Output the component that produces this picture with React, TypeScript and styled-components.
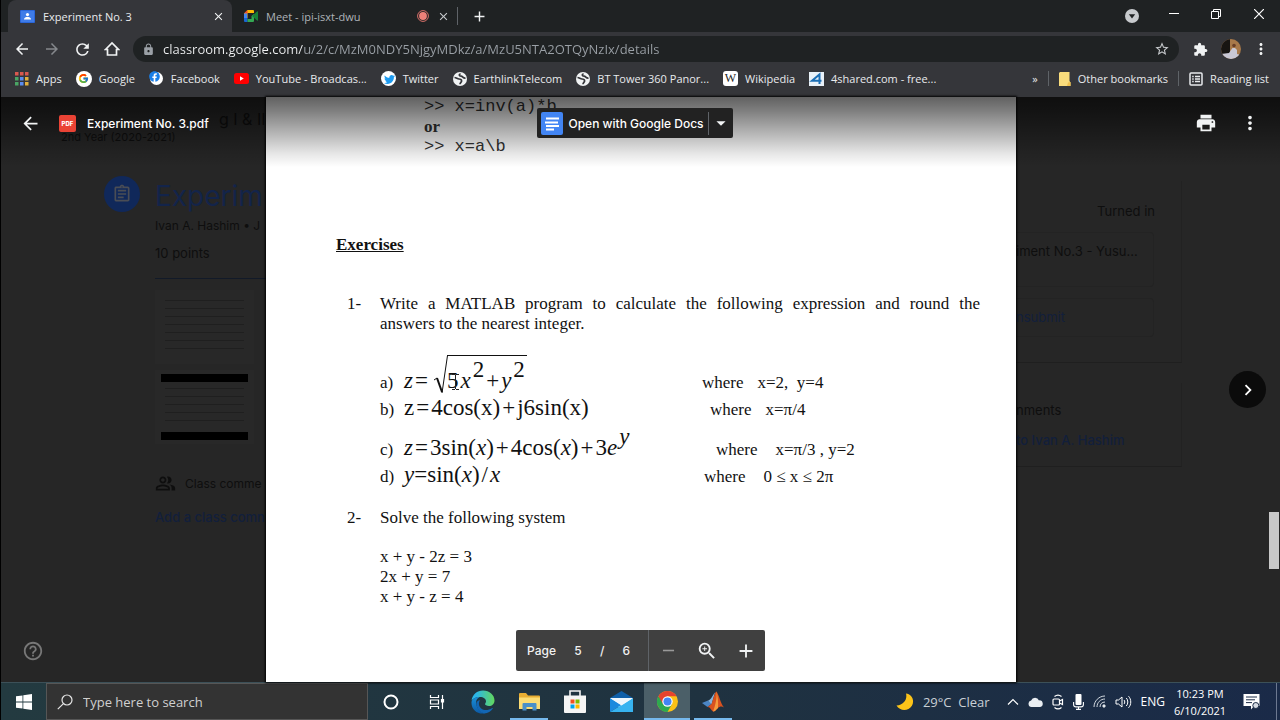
import React from "react";
import styled, { createGlobalStyle, css } from "styled-components";
import {
  MdAdd,
  MdArrowBack,
  MdArrowForward,
  MdArrowDropDown,
  MdChevronRight,
  MdClose,
  MdExtension,
  MdHelpOutline,
  MdLock,
  MdMoreVert,
  MdOutlineAssignment,
  MdOutlinePeopleAlt,
  MdPrint,
  MdRefresh,
  MdRemove,
  MdStarBorder,
  MdZoomIn,
} from "react-icons/md";
import { FaFacebook, FaTwitter } from "react-icons/fa";
import { FcGoogle } from "react-icons/fc";

const uiFont = `"Open Sans", "Noto Sans", sans-serif`;
const productFont = `Inter, Roboto, sans-serif`;
const docFont = `"Liberation Serif", "Times New Roman", serif`;
const monoFont = `"Liberation Mono", "Courier New", monospace`;

const GlobalStyle = createGlobalStyle`
  * { box-sizing: border-box; }
  body { margin: 0; background: #000; font-family: ${uiFont}; }
  button, input { font: inherit; color: inherit; margin: 0; padding: 0; border: 0; background: none; }
  button { cursor: pointer; }
  a { color: inherit; text-decoration: none; }
  p, h1, h2, ol, ul { margin: 0; padding: 0; }
  svg { display: block; flex: none; }
`;

const Screen = styled.div`
  display: flex;
  flex-direction: column;
  min-height: 100vh;
  border-left: 1px solid #000;
  overflow: hidden;
`;

/* ---------- Browser frame ---------- */

const TabStrip = styled.header`
  display: flex;
  align-items: stretch;
  height: 32px;
  padding-left: 7px;
  background: #1f2223;
  color: #e8eaed;
  font-size: 11px;
`;

const Tab = styled.div<{ $active?: boolean }>`
  display: flex;
  align-items: center;
  gap: 8px;
  width: ${(p) => (p.$active ? 224 : 225)}px;
  padding: 0 8px 0 12px;
  border-radius: 8px 8px 0 0;
  background: ${(p) => (p.$active ? "#35363a" : "transparent")};
  color: ${(p) => (p.$active ? "#e8eaed" : "#aeb3b8")};
`;

const TabTitle = styled.span`
  flex: 1;
  white-space: nowrap;
`;

const IconButton = styled.button<{ $w: number; $color?: string }>`
  display: flex;
  align-items: center;
  justify-content: center;
  flex: none;
  width: ${(p) => p.$w}px;
  color: ${(p) => p.$color ?? "#f1f3f4"};
`;

const Divider = styled.span<{ $h: number; $color?: string }>`
  flex: none;
  align-self: center;
  width: 1px;
  height: ${(p) => p.$h}px;
  background: ${(p) => p.$color ?? "#5f6368"};
`;

const Spacer = styled.span`
  flex: 1;
`;

const WindowButtons = styled.div`
  display: flex;
  align-items: center;
  padding-bottom: 4px;
`;

const Toolbar = styled.div`
  display: flex;
  align-items: center;
  height: 34px;
  padding: 0 4px 0 6px;
  background: #35363a;
`;

const Omnibox = styled.label`
  display: flex;
  align-items: center;
  gap: 8px;
  flex: 1;
  height: 26px;
  margin: 0 6px;
  padding: 0 9px;
  border-radius: 13px;
  background: #1f2223;
  color: #9aa0a6;
`;

const Address = styled.input`
  flex: 1;
  min-width: 0;
  height: 22px;
  font-size: 13px;
  color: #9aa0a6;
  outline: none;
  background: linear-gradient(90deg, #f1f3f4 140px, #9aa0a6 140px);
  background-clip: text;
  -webkit-text-fill-color: transparent;
`;

const Bookmarks = styled.nav`
  display: flex;
  align-items: center;
  gap: 14px;
  height: 31px;
  padding: 0 11px 6px 14px;
  background: #35363a;
  color: #e8eaed;
  font-size: 11px;
  white-space: nowrap;
`;

const Bookmark = styled.a`
  display: flex;
  align-items: center;
  gap: 7px;
`;

const BookmarkEnd = styled.div`
  display: flex;
  align-items: center;
  gap: 10px;
  margin-left: auto;
`;

/* ---------- Viewer ---------- */

const Viewer = styled.main`
  display: grid;
  grid-template-columns: minmax(0, 1fr) minmax(0, 750px) minmax(0, 1fr);
  flex: 1;
  padding-left: 1px;
  background: #262626;
  font-family: ${productFont};
  position: relative;
`;

const Behind = styled.div<{ $col: number }>`
  grid-area: 1 / ${(p) => p.$col};
  overflow: hidden;
  color: #0e0e0e;
  font-size: 13px;
  line-height: 20px;
  white-space: nowrap;
`;

const CourseHeader = styled.div`
  height: 79px;
  padding: 13px 0 0 59px;
  font-size: 11px;
  line-height: 18px;
`;

const CourseName = styled.div`
  padding-left: 158px;
  font-size: 16px;
`;

const Assignment = styled.div`
  display: grid;
  grid-template-columns: 36px 1fr;
  column-gap: 15px;
  padding-left: 102px;
`;

const Badge = styled.span`
  display: flex;
  align-items: center;
  justify-content: center;
  width: 36px;
  height: 36px;
  border-radius: 50%;
  background: #10285a;
  color: #4a4d55;
`;

const AssignmentBody = styled.div`
  display: flex;
  flex-direction: column;
`;

const AssignmentTitle = styled.h1`
  font-size: 28px;
  font-weight: 400;
  line-height: 40px;
  color: #13244a;
`;

const Author = styled.div`
  font-size: 12px;
`;

const Points = styled.div`
  padding: 7px 0 15px;
  border-bottom: 1px solid #121a28;
`;

const Thumb = styled.div`
  display: flex;
  flex-direction: column;
  width: 99px;
  height: 74px;
  margin-top: 11px;
  padding: 4px 6px;
  background: #282828;

  & + & {
    margin-top: 6px;
  }
`;

const ThumbBar = styled.span`
  height: 8px;
  background: #000;
`;

const ThumbLines = styled.span`
  flex: 1;
  margin: 6px 4px;
  background: repeating-linear-gradient(180deg, #1f1f1f 0 1px, transparent 1px 8px);
`;

const CommentsTitle = styled.div`
  display: flex;
  align-items: center;
  gap: 9px;
  padding: 29px 0 13px;
  font-size: 12px;
`;

const BlueText = styled.div`
  color: #121f3b;
  font-weight: 500;
`;

const SideCard = styled.section<{ $last?: boolean }>`
  display: flex;
  flex-direction: column;
  width: 166px;
  margin-top: ${(p) => (p.$last ? 20 : 84)}px;
  padding-top: ${(p) => (p.$last ? 17 : 20)}px;
  padding-bottom: ${(p) => (p.$last ? 16 : 25)}px;
  gap: ${(p) => (p.$last ? 10 : 11)}px;
  border-right: 1px solid #222;
  border-bottom: 1px solid #1f1f1f;
`;

const Turned = styled.div`
  align-self: flex-end;
  padding-right: 26px;
`;

const Slot = styled.div<{ $blue?: boolean }>`
  width: 138px;
  padding: ${(p) => (p.$blue ? "8px 0 9px" : "8px 0 25px")};
  border: 1px solid #232323;
  border-left: 0;
  border-radius: 0 4px 4px 0;
  color: ${(p) => (p.$blue ? "#121f3b" : "#0e0e0e")};
`;

const Sheet = styled.article`
  grid-area: 1 / 2;
  padding: 0 36px 0 70px;
  background: #fff;
  box-shadow: 0 0 2px 1px #000;
  color: #111;
  font-family: ${docFont};
  font-size: 17px;
  line-height: 20px;
`;

const CodeBlock = styled.div`
  padding-left: 88px;
  color: #333;
`;

const Code = styled.div`
  font-family: ${monoFont};
  white-space: pre;
`;

const Heading = styled.h2`
  margin: 78px 0 39px;
  font-size: 17px;
  line-height: 20px;
  text-decoration: underline;
`;

const Question = styled.div`
  display: grid;
  grid-template-columns: 33px 1fr;
  padding-left: 11px;
`;

const Prompt = styled.p`
  text-align: justify;
`;

const Expressions = styled.div`
  margin: 21px 0 19px 44px;
`;

const Expression = styled.div<{ $space?: boolean }>`
  display: grid;
  grid-template-columns: 24px 298px 1fr;
  align-items: baseline;
  margin-top: ${(p) => (p.$space ? 13 : 0)}px;
  line-height: 25px;
`;

const Formula = styled.span`
  display: inline-flex;
  align-items: baseline;
  gap: 2px;
  font-size: 23px;
  white-space: pre;
`;

const Root = styled.span`
  display: inline-flex;
  align-items: baseline;
  gap: 2px;
  position: relative;
  margin-left: 17px;
  padding: 12px 2px 0 0;
  border-top: 1px solid #111;
`;

const RootSign = styled.svg`
  position: absolute;
  left: -14px;
  top: -1px;
`;

const Power = styled.span`
  position: relative;
  bottom: 11px;
  line-height: 1px;
`;

const Where = styled.span<{ $indent: number; $far?: boolean }>`
  display: flex;
  gap: ${(p) => (p.$far ? 18 : 14)}px;
  padding-left: ${(p) => p.$indent}px;
`;

const System = styled.div`
  margin: 19px 0 0 44px;
`;

const Caret = styled.svg`
  position: absolute;
  left: 4px;
  top: 17px;
`;

const Controls = styled.div`
  grid-area: 1 / 1 / 2 / -1;
  display: grid;
  grid-template-rows: 1fr auto 1fr;
  z-index: 1;
`;

const ViewerHeader = styled.div`
  display: grid;
  grid-template-columns: 1fr auto 1fr;
  align-items: start;
  align-self: start;
  height: 70px;
  padding: 11px 25px 0 13px;
  margin-left: -1px;
  background: linear-gradient(180deg, rgba(0, 0, 0, 0.62), rgba(0, 0, 0, 0.5) 20%, rgba(0, 0, 0, 0.1) 80%, transparent);
  color: #fff;
  font-size: 12px;
  font-weight: 500;
`;

const FileTitle = styled.div<{ $end?: boolean }>`
  display: flex;
  align-items: center;
  justify-content: ${(p) => (p.$end ? "flex-end" : "flex-start")};
  gap: ${(p) => (p.$end ? 28 : 11)}px;
  height: 30px;
`;

const PdfMark = styled.span`
  display: flex;
  align-items: center;
  justify-content: center;
  width: 17px;
  height: 17px;
  margin-left: 2px;
  border-radius: 2px;
  background: #ea4335;
  font-size: 6px;
  font-weight: 800;
`;

const OpenWith = styled.div`
  display: flex;
  align-items: center;
  width: 196px;
  height: 30px;
  border-radius: 2px;
  background: #222;
`;

const OpenButton = styled.button`
  display: flex;
  align-items: center;
  gap: 6px;
  flex: 1;
  padding-left: 4px;
  white-space: nowrap;
`;

const NextButton = styled.button`
  display: flex;
  align-items: center;
  justify-content: center;
  justify-self: end;
  width: 37px;
  height: 37px;
  margin-right: 14px;
  border-radius: 50%;
  background: #0b0b0b;
  color: #fff;
`;

const ViewerFooter = styled.div`
  display: grid;
  grid-template-columns: 1fr auto 1fr;
  align-items: center;
  align-self: end;
  padding: 0 0 11px 20px;
`;

const Pager = styled.div`
  display: flex;
  align-items: center;
  height: 41px;
  margin-right: 21px;
  border-radius: 2px;
  background: #404040;
  color: #f1f1f1;
  font-size: 12px;
  font-weight: 500;
`;

const PageField = styled.label`
  display: flex;
  align-items: center;
  gap: 12px;
  width: 132px;
  padding-left: 11px;
`;

const PageInput = styled.input`
  width: 20px;
  text-align: center;
`;

const PagerButtons = styled.div`
  display: flex;
  justify-content: space-around;
  width: 116px;
`;

const ScrollThumb = styled.span`
  position: absolute;
  right: 1px;
  top: 71%;
  width: 10px;
  height: 57px;
  background: #c8c8c8;
`;

/* ---------- Task bar ---------- */

const Taskbar = styled.footer`
  display: flex;
  height: 38px;
  border-top: 1px solid #3c5058;
  background: linear-gradient(90deg, #233a40, #1f3240 55%, #1a2a48);
  color: #fff;
`;

const StartButton = styled(IconButton)`
  width: 45px;
`;

const Search = styled.label`
  display: flex;
  align-items: center;
  gap: 10px;
  flex: 0 1 322px;
  padding-left: 10px;
  border: 1px solid #565656;
  background: #333;
`;

const SearchInput = styled.input`
  flex: 1;
  min-width: 0;
  font-size: 13px;
  outline: none;
  &::placeholder {
    color: #d0d0d0;
    opacity: 1;
  }
`;

const TaskButton = styled.button<{ $running?: boolean; $active?: boolean }>`
  display: flex;
  align-items: center;
  justify-content: center;
  width: 46px;
  ${(p) =>
    p.$running &&
    css`
      background: linear-gradient(#76b9ed, #76b9ed) center bottom / 38px 2px no-repeat;
    `}
  ${(p) =>
    p.$active &&
    css`
      background: linear-gradient(#76b9ed, #76b9ed) center bottom / 46px 2px no-repeat, #4b5f68;
    `}
`;

const Tray = styled.div`
  display: flex;
  align-items: center;
  margin-left: auto;
  padding-right: 3px;
  font-size: 12px;
`;

const Weather = styled.button`
  display: flex;
  align-items: center;
  gap: 9px;
  margin-right: 17px;
  color: #c9d0d6;
  font-size: 13px;
  white-space: nowrap;
`;

const TrayIcons = styled.div`
  display: flex;
  align-items: center;
  gap: 9px;
  margin-right: 9px;
`;

const Clock = styled.time`
  width: 52px;
  font-size: 11px;
  line-height: 17px;
  text-align: center;
  white-space: nowrap;
`;

/* ---------- Drawn icons ---------- */

const ClassroomIcon = () => (
  <svg width="15" height="13" viewBox="0 0 15 13">
    <rect width="15" height="13" rx="1" fill="#2a66d9" />
    <rect x="1" y="1" width="13" height="11" fill="#3f7ce8" />
    <circle cx="7.5" cy="4.6" r="1.6" fill="#fff" />
    <path d="M4 9.4c0-2 2-2.4 3.500-2.400s3.500.4 3.500 2.400z" fill="#fff" />
  </svg>
);

const MeetIcon = () => (
  <svg width="14" height="12" viewBox="0 0 14 12">
    <path d="M0 3.500L3.500 0H9a1 1 0 0 1 1 1v2H3.500v5H0z" fill="#fbbc04" />
    <path d="M0 3.500L3.500 0v3.500z" fill="#ea4335" />
    <path d="M0 3.500h3.200v5H0z" fill="#4285f4" />
    <path d="M0 8h3.500v4H1a1 1 0 0 1-1-1z" fill="#1967d2" />
    <path d="M3.500 9H7.500V6L10 4v7a1 1 0 0 1-1 1H3.500z" fill="#34a853" />
    <path d="M8 6l5-4.500c.5-.4 1 0 1 .3v8.400c0 .5-.6.700-1 .3z" fill="#188038" />
  </svg>
);

const RecordIcon = () => (
  <svg width="12" height="12" viewBox="0 0 12 12">
    <circle cx="6" cy="6" r="5.400" fill="none" stroke="#d9706a" />
    <circle cx="6" cy="6" r="3.900" fill="#ee8079" />
  </svg>
);

const HomeIcon = () => (
  <svg width="16" height="16" viewBox="0 0 16 16" fill="none" stroke="#f1f3f4" strokeWidth="1.700">
    <path d="M1.500 8.500L8 2l6.500 6.500H12.500v5.500h-9V8.500z" />
  </svg>
);

const AppsIcon = () => {
  const colors = ["#d9594f", "#d9594f", "#d9594f", "#4aa564", "#5b8def", "#e2b13c", "#4aa564", "#5b8def", "#e2b13c"];
  return (
    <svg width="14" height="14" viewBox="0 0 14 14">
      {colors.map((c, i) => (
        <rect key={i} x={(i % 3) * 5} y={Math.floor(i / 3) * 5} width="3.500" height="3.500" fill={c} />
      ))}
    </svg>
  );
};

const GoogleMark = () => (
  <svg width="16" height="16" viewBox="0 0 16 16">
    <circle cx="8" cy="8" r="8" fill="#fff" />
    <FcGoogle x="2" y="2" width="12" height="12" />
  </svg>
);

const FacebookMark = () => (
  <svg width="15" height="15" viewBox="0 0 15 15">
    <circle cx="7.500" cy="7.500" r="6.500" fill="#fff" />
    <FaFacebook x="0" y="0" width="15" height="15" color="#1b7fe8" />
  </svg>
);

const YouTubeMark = () => (
  <svg width="15" height="11" viewBox="0 0 15 11">
    <rect width="15" height="11" rx="2.500" fill="#f00" />
    <path d="M6 3.200v4.600l3.800-2.300z" fill="#fff" />
  </svg>
);

const TwitterMark = () => (
  <svg width="15" height="15" viewBox="0 0 15 15">
    <circle cx="7.500" cy="7.500" r="7.500" fill="#fff" />
    <FaTwitter x="3" y="3" width="9" height="9" color="#1d9bf0" />
  </svg>
);

const GlobeMark = () => (
  <svg width="14" height="14" viewBox="0 0 14 14">
    <circle cx="7" cy="7" r="7" fill="#f1f3f4" />
    <path d="M1.500 5.500c2 .2 2.800 1.500 4.500 1.500 1.400 0 2.600.6 2.600 2S7 10.500 7 12.300M7.600 1.700C5.500 2.300 6 4.200 8 4.200s1.800 2.300 4.500 1.900" fill="none" stroke="#35363a" strokeWidth="1.700" />
  </svg>
);

const WikiBox = styled.span`
  display: flex;
  align-items: center;
  justify-content: center;
  width: 15px;
  height: 15px;
  border-radius: 3px;
  background: #fff;
  color: #222;
  font: 12px/15px ${docFont};
`;

const FourMark = () => (
  <svg width="15" height="14" viewBox="0 0 15 14">
    <rect width="15" height="14" fill="#e9f1f8" />
    <path d="M10.500 12V2.500L3 8.800h9.500" fill="none" stroke="#1c6fb5" strokeWidth="2" />
  </svg>
);

const FolderMark = () => (
  <svg width="12" height="14" viewBox="0 0 12 14">
    <path d="M1 0h9.500v9l1 1.500V14H0V1z" fill="#f9dc7c" />
    <path d="M9 10.500l2.500-.5v4H8z" fill="#eec04f" />
  </svg>
);

const ReadingMark = () => (
  <svg width="14" height="14" viewBox="0 0 14 14" fill="none" stroke="#e8eaed" strokeWidth="1.500">
    <rect x="1" y="1" width="12" height="12" rx="1" />
    <path d="M3.200 4.500h1.500M3.200 7h1.500M3.200 9.500h1.500M6 4.500h5M6 7h5M6 9.500h5" />
  </svg>
);

const Avatar = () => (
  <svg width="20" height="20" viewBox="0 0 20 20">
    <defs>
      <clipPath id="avatarClip">
        <circle cx="10" cy="10" r="10" />
      </clipPath>
    </defs>
    <g clipPath="url(#avatarClip)">
      <rect width="20" height="20" fill="#a8794a" />
      <rect width="9" height="15" fill="#171512" />
      <path d="M0 15l8-1 2-3 1.500-2h2.500l2 2v4l4 1v4H0z" fill="#c9c8d4" />
      <circle cx="13" cy="6.500" r="1.800" fill="#6b4028" />
    </g>
  </svg>
);

const TabMenuIcon = () => (
  <svg width="14" height="14" viewBox="0 0 14 14">
    <circle cx="7" cy="7" r="7" fill="#c7cacd" />
    <path d="M3.800 5.300h6.400L7 9.500z" fill="#1f2223" />
  </svg>
);

const MinimizeIcon = () => (
  <svg width="10" height="10" viewBox="0 0 10 10" stroke="#fff">
    <path d="M0 4.500h10" />
  </svg>
);

const RestoreIcon = () => (
  <svg width="10" height="10" viewBox="0 0 10 10" fill="none" stroke="#fff">
    <path d="M.5 2.500h7v7h-7zM2.500 2.500v-2h7v7h-2" />
  </svg>
);

const CloseIcon = () => (
  <svg width="10" height="10" viewBox="0 0 10 10" stroke="#fff" strokeWidth="1.200">
    <path d="M0 0l10 10M10 0L0 10" />
  </svg>
);

const DocsIcon = () => (
  <svg width="22" height="23" viewBox="0 0 22 23">
    <rect width="22" height="23" rx="2" fill="#4285f4" />
    <path d="M5 6.500h13M4 10.500h13M5 14h13M5 17.500h8" stroke="#fff" strokeWidth="2" />
  </svg>
);

const WindowsIcon = () => (
  <svg width="16" height="16" viewBox="0 0 16 16" fill="#fff">
    <path d="M0 2.300L6.500 1.400v6.200H0zM7.300 1.300L16 0v7.600H7.300zM0 8.400h6.500v6.200L0 13.700zM7.300 8.400H16V16l-8.700-1.300z" />
  </svg>
);

const SearchIcon = () => (
  <svg width="16" height="16" viewBox="0 0 16 16" fill="none" stroke="#e6e6e6" strokeWidth="1.200">
    <circle cx="10" cy="6" r="5" />
    <path d="M6.400 9.600L.8 15.200" />
  </svg>
);

const CortanaIcon = () => (
  <svg width="16" height="16" viewBox="0 0 16 16" fill="none" stroke="#fff" strokeWidth="2">
    <circle cx="8" cy="8" r="6.500" />
  </svg>
);

const TaskViewIcon = () => (
  <svg width="16" height="16" viewBox="0 0 16 16" fill="none" stroke="#fff" strokeWidth="1.200">
    <path d="M1.500 1v2.500h8V1M1.500 15v-2.500h8V15M1.500 6h8v4h-8zM13.500 1v14" />
    <path d="M12.500 5.500h2v2.500h-2z" fill="#fff" />
  </svg>
);

const EdgeIcon = () => (
  <svg width="24" height="24" viewBox="0 0 24 24">
    <defs>
      <linearGradient id="edgeTop" x1="0" x2="1">
        <stop offset="0.200" stopColor="#2bb5e8" />
        <stop offset="1" stopColor="#63d85c" />
      </linearGradient>
      <linearGradient id="edgeLow" x1="0" x2="0" y1="0" y2="1">
        <stop offset="0" stopColor="#1a8fd8" />
        <stop offset="1" stopColor="#0c59a4" />
      </linearGradient>
    </defs>
    <path d="M.6 10.500C1.300 4.500 6.200.5 12 .5c6.500 0 11.500 4.500 11.500 10 0 3.500-2.500 5.500-5.500 5.500-2.500 0-4-1-4-1.900 0-.7 1-1.100 1-2.900 0-2.200-2.400-4.200-6-4.200C5 7 1.800 8.800.6 10.500z" fill="url(#edgeTop)" />
    <path d="M.5 12C.8 9 4.500 6.800 8.500 6.900c-2.500 1.200-4 4-3.200 7.600.7 3.600 3.600 7 8.200 8.900C6.500 24.600.1 19.500.5 12z" fill="url(#edgeLow)" />
    <path d="M9 10.200c-1.600 2.200-1.500 6 1.200 8.200 2.800 2.300 6.900 2.200 11-.4.500-.3.900.1.600.6-1.900 3.200-5.200 4.900-8.700 4.800-4.400-1.500-7.200-5-7.800-8.900-.3-2.500 1.400-4.300 3.700-4.300z" fill="#1266b4" />
  </svg>
);

const ExplorerIcon = () => (
  <svg width="21" height="18" viewBox="0 0 21 18">
    <path d="M0 1a1 1 0 0 1 1-1h6l2 2.500h11a1 1 0 0 1 1 1V16H0z" fill="#e8ae33" />
    <path d="M0 4.500h21V16H0z" fill="#fbdc73" />
    <path d="M3.500 17.500V11a1 1 0 0 1 1-1h12a1 1 0 0 1 1 1v6.500h-4V14h-6v3.500z" fill="#4a90c8" />
  </svg>
);

const StoreIcon = () => (
  <svg width="22" height="23" viewBox="0 0 22 23">
    <path d="M6 6V1h10v5" fill="none" stroke="#f3f3f3" strokeWidth="1.600" />
    <path d="M0 5.500h22V22a1 1 0 0 1-1 1H1a1 1 0 0 1-1-1z" fill="#f5f5f5" />
    <path d="M6.500 9.500h4v4h-4z" fill="#f25022" />
    <path d="M11.500 9.500h4v4h-4z" fill="#7fba00" />
    <path d="M6.500 14.500h4v4h-4z" fill="#00a4ef" />
    <path d="M11.500 14.500h4v4h-4z" fill="#ffb900" />
  </svg>
);

const MailIcon = () => (
  <svg width="23" height="21" viewBox="0 0 23 21">
    <path d="M0 7L11.500 0 23 7v3H0z" fill="#0f5fa8" />
    <path d="M1 7h21v9H1z" fill="#e8f3fb" />
    <path d="M0 7l11.500 7L0 21z" fill="#1b8ade" />
    <path d="M23 7v14H0z" fill="#37b3f0" />
    <path d="M0 7h23l-11.500 7.500z" fill="#eef6fc" />
  </svg>
);

const ChromeIcon = () => (
  <svg width="21" height="21" viewBox="0 0 21 21">
    <circle cx="10.500" cy="10.500" r="10.500" fill="#fbc116" />
    <path d="M10.500 10.500L1.400 5.250A10.500 10.500 0 0 0 10.500 21L15 13z" fill="#2da94f" />
    <path d="M1.400 5.250A10.500 10.500 0 0 1 19.600 5.250H10.500L6 13.100z" fill="#e5432f" />
    <circle cx="10.500" cy="10.500" r="5.200" fill="#fff" />
    <circle cx="10.500" cy="10.500" r="4" fill="#4285f4" />
  </svg>
);

const MatlabIcon = () => (
  <svg width="22" height="21" viewBox="0 0 22 21">
    <path d="M0 12l6-2.500 3.500 3.500L5.500 16z" fill="#4c86c4" />
    <path d="M6 9.500c3-.5 4-4.500 7-8l-3.500 12z" fill="#86b3dc" />
    <path d="M5.500 16l4-3C11 10 12.500 1 14.500.5c2.500 3 4 12 7.500 16-2-1.500-4-1.500-6 .5-2 1.800-3 3.500-5 3.500-1.500-1-3-5-5.500-4.500z" fill="#d8521f" />
    <path d="M14.500.5c.6 6-1 14-3.500 20 2 0 3-1.700 5-3.500.4-5-.2-12-1.500-16.500z" fill="#f59a3c" />
  </svg>
);

const MoonIcon = () => (
  <svg width="18" height="18" viewBox="0 0 18 18">
    <path d="M10 .5C11.500 6 8 12 .5 12.500 3 16.500 8 18.500 12.500 16c5-2.800 6-9 2.500-13C13.600 1.500 12 .7 10 .5z" fill="#fcc419" />
  </svg>
);

const ChevronUp = () => (
  <svg width="12" height="8" viewBox="0 0 12 8" fill="none" stroke="#fff" strokeWidth="1.200">
    <path d="M1 6.500L6 1.500l5 5" />
  </svg>
);

const CloudIcon = () => (
  <svg width="15" height="10" viewBox="0 0 15 10">
    <path d="M3.500 10a3.300 3.300 0 0 1-.4-6.500A4.300 4.300 0 0 1 11 3.400 3.300 3.300 0 0 1 11.800 10z" fill="#e9edf1" />
  </svg>
);

const MeetNowIcon = () => (
  <svg width="12" height="16" viewBox="0 0 12 16" fill="none" stroke="#fff" strokeWidth="1.200">
    <rect x="1" y="5" width="6.500" height="6" rx="1" />
    <path d="M7.500 7l3-1.500v5l-3-1.500M2.500 2.500c2-1.600 5-1.600 7 0M2.500 13.500c2 1.600 5 1.600 7 0" />
  </svg>
);

const MicIcon = () => (
  <svg width="11" height="16" viewBox="0 0 11 16">
    <rect x="2.500" y="0" width="6" height="11" rx="1" fill="#fff" />
    <path d="M.6 8v2.500c0 1.500 1 2.400 2.400 2.400h5c1.400 0 2.400-.9 2.400-2.400V8M5.500 13v2.400M3 15.400h5" fill="none" stroke="#fff" strokeWidth="1.100" />
  </svg>
);

const WifiIcon = () => (
  <svg width="13" height="13" viewBox="0 0 13 13" fill="none" stroke="#d5dbe2">
    <path d="M1 12C1 6 6 1 12 1M4 12c0-4.500 3.500-8 8-8M7 12c0-3 2-5 5-5" />
    <circle cx="11" cy="11" r="1.200" fill="#fff" />
  </svg>
);

const VolumeIcon = () => (
  <svg width="17" height="14" viewBox="0 0 17 14" fill="none" stroke="#fff">
    <path d="M1 5h2.500L7 2v10L3.500 9H1zM9 5c1 1 1 3 0 4M11.300 3c2 2 2 6 0 8M13.500 1.200c3 3 3 8.600 0 11.600" />
  </svg>
);

const NoticeIcon = () => (
  <svg width="17" height="16" viewBox="0 0 17 16">
    <path d="M.5 0h16v12H11l-3 3.500V12H.5z" fill="#fff" />
    <path d="M3 3h11M3 5.800h9M3 8.600h6" stroke="#1c2c46" />
    <circle cx="12.800" cy="11.500" r="3" fill="#d5dae2" stroke="#1c2c46" />
  </svg>
);

/* ---------- Page data ---------- */

const bookmarks: { label: string; icon: React.ReactNode }[] = [
  { label: "Apps", icon: <AppsIcon /> },
  { label: "Google", icon: <GoogleMark /> },
  { label: "Facebook", icon: <FacebookMark /> },
  { label: "YouTube - Broadcas...", icon: <YouTubeMark /> },
  { label: "Twitter", icon: <TwitterMark /> },
  { label: "EarthlinkTelecom", icon: <GlobeMark /> },
  { label: "BT Tower 360 Panor...", icon: <GlobeMark /> },
  { label: "Wikipedia", icon: <WikiBox>W</WikiBox> },
  { label: "4shared.com - free...", icon: <FourMark /> },
];

const Browser = () => (
  <>
    <TabStrip>
      <Tab $active>
        <ClassroomIcon />
        <TabTitle>Experiment No. 3</TabTitle>
        <IconButton $w={12} aria-label="Close tab"><MdClose size={13} /></IconButton>
      </Tab>
      <Tab>
        <MeetIcon />
        <TabTitle>Meet - ipi-isxt-dwu</TabTitle>
        <RecordIcon />
        <IconButton $w={12} $color="#c7cacd" aria-label="Close tab"><MdClose size={13} /></IconButton>
      </Tab>
      <Divider $h={18} />
      <IconButton $w={42} aria-label="New tab"><MdAdd size={17} /></IconButton>
      <Spacer />
      <IconButton $w={42} aria-label="Search tabs"><TabMenuIcon /></IconButton>
      <WindowButtons>
        <IconButton $w={42} aria-label="Minimize"><MinimizeIcon /></IconButton>
        <IconButton $w={42} aria-label="Restore"><RestoreIcon /></IconButton>
        <IconButton $w={43} aria-label="Close"><CloseIcon /></IconButton>
      </WindowButtons>
    </TabStrip>
    <Toolbar>
      <IconButton $w={30} aria-label="Back"><MdArrowBack size={18} /></IconButton>
      <IconButton $w={30} $color="#85888c" aria-label="Forward"><MdArrowForward size={18} /></IconButton>
      <IconButton $w={30} aria-label="Reload"><MdRefresh size={19} /></IconButton>
      <IconButton $w={30} aria-label="Home"><HomeIcon /></IconButton>
      <Omnibox>
        <MdLock size={13} />
        <Address
          aria-label="Address"
          defaultValue="classroom.google.com/u/2/c/MzM0NDY5NjgyMDkz/a/MzU5NTA2OTQyNzIx/details"
        />
        <IconButton $w={16} $color="#c7cacd" aria-label="Bookmark this tab"><MdStarBorder size={16} /></IconButton>
      </Omnibox>
      <IconButton $w={30} aria-label="Extensions"><MdExtension size={15} /></IconButton>
      <IconButton $w={31} aria-label="Profile"><Avatar /></IconButton>
      <IconButton $w={30} aria-label="Menu"><MdMoreVert size={18} /></IconButton>
    </Toolbar>
    <Bookmarks>
      {bookmarks.map((b) => (
        <Bookmark href="#" key={b.label}>
          {b.icon}
          {b.label}
        </Bookmark>
      ))}
      <BookmarkEnd>
        <span>»</span>
        <Divider $h={15} />
        <Bookmark href="#"><FolderMark />Other bookmarks</Bookmark>
        <Divider $h={15} />
        <Bookmark href="#"><ReadingMark />Reading list</Bookmark>
      </BookmarkEnd>
    </Bookmarks>
  </>
);

const Classroom = () => (
  <>
    <Behind $col={1}>
      <CourseHeader>
        <CourseName>g I &amp; II</CourseName>
        2nd Year (2020-2021)
      </CourseHeader>
      <Assignment>
        <Badge><MdOutlineAssignment size={20} /></Badge>
        <AssignmentBody>
          <AssignmentTitle>Experim</AssignmentTitle>
          <Author>Ivan A. Hashim • J</Author>
          <Points>10 points</Points>
          <Thumb><ThumbLines /></Thumb>
          <Thumb>
            <ThumbBar />
            <ThumbLines />
            <ThumbBar />
          </Thumb>
          <CommentsTitle><MdOutlinePeopleAlt size={21} />Class comme</CommentsTitle>
          <BlueText>Add a class comn</BlueText>
        </AssignmentBody>
      </Assignment>
    </Behind>
    <Behind $col={3}>
      <SideCard>
        <Turned>Turned in</Turned>
        <Slot>iment No.3 - Yusu...</Slot>
        <Slot $blue>nsubmit</Slot>
      </SideCard>
      <SideCard $last>
        <div>nments</div>
        <BlueText>to Ivan A. Hashim</BlueText>
      </SideCard>
    </Behind>
  </>
);

const Document = () => (
  <Sheet>
    <CodeBlock>
      <Code>{">> x=inv(a)*b"}</Code>
      <b>or</b>
      <Code>{">> x=a\\b"}</Code>
    </CodeBlock>
    <Heading>Exercises</Heading>
    <Question>
      <span>1-</span>
      <Prompt>
        Write a MATLAB program to calculate the following expression and round the answers&nbsp;to the nearest integer.
      </Prompt>
    </Question>
    <Expressions>
      <Expression>
        <span>a)</span>
        <Formula>
          <i>z</i>
          <span>=</span>
          <Root>
            <RootSign width="15" height="39" viewBox="0 0 15 39" fill="none" stroke="#111">
              <path d="M1 25l3-2" />
              <path d="M4 23l5 14" strokeWidth="2" />
              <path d="M9 38L14.500.5" />
            </RootSign>
            <span>5</span>
            <i>x</i>
            <Power>2</Power>
            <span>+</span>
            <i>y</i>
            <Power>2</Power>
            <Caret width="9" height="18" viewBox="0 0 9 18" fill="none" stroke="#222">
              <path d="M1 1.500h3M5 1.500h3M4.500 2v14M1 16.500h3M5 16.500h3" />
            </Caret>
          </Root>
        </Formula>
        <Where $indent={0}><span>where</span><span>x=2,&nbsp; y=4</span></Where>
      </Expression>
      <Expression>
        <span>b)</span>
        <Formula><span>z</span><span>=</span><span>4cos(x)</span><span>+</span><span>j6sin(x)</span></Formula>
        <Where $indent={8}><span>where</span><span>x=π/4</span></Where>
      </Expression>
      <Expression $space>
        <span>c)</span>
        <Formula>
          <i>z</i><span>=</span><span>3sin(<i>x</i>)</span><span>+</span><span>4cos(<i>x</i>)</span><span>+</span>
          <span>3<i>e</i></span><Power><i>y</i></Power>
        </Formula>
        <Where $indent={14} $far><span>where</span><span>x=π/3 , y=2</span></Where>
      </Expression>
      <Expression>
        <span>d)</span>
        <Formula><span><i>y</i>=sin(<i>x</i>)</span><span>/</span> <i>x</i></Formula>
        <Where $indent={2} $far><span>where</span><span>0 ≤ x ≤ 2π</span></Where>
      </Expression>
    </Expressions>
    <Question>
      <span>2-</span>
      <p>Solve the following system</p>
    </Question>
    <System>
      <p>x + y - 2z = 3</p>
      <p>2x + y = 7</p>
      <p>x + y - z = 4</p>
    </System>
  </Sheet>
);

const ViewerControls = () => (
  <Controls>
    <ViewerHeader>
      <FileTitle>
        <IconButton $w={32} aria-label="Close viewer"><MdArrowBack size={21} /></IconButton>
        <PdfMark>PDF</PdfMark>
        <span>Experiment No. 3.pdf</span>
      </FileTitle>
      <OpenWith>
        <OpenButton><DocsIcon />Open with Google Docs</OpenButton>
        <Divider $h={23} />
        <IconButton $w={24} aria-label="Other apps"><MdArrowDropDown size={22} /></IconButton>
      </OpenWith>
      <FileTitle $end>
        <IconButton $w={22} aria-label="Print"><MdPrint size={22} /></IconButton>
        <IconButton $w={10} aria-label="More actions"><MdMoreVert size={22} /></IconButton>
      </FileTitle>
    </ViewerHeader>
    <NextButton aria-label="Next file"><MdChevronRight size={22} /></NextButton>
    <ViewerFooter>
      <IconButton $w={22} $color="#777" aria-label="Help"><MdHelpOutline size={22} /></IconButton>
      <Pager>
        <PageField>
          Page
          <PageInput aria-label="Page number" defaultValue="5" />
          <span>/</span>
          <PageInput as="span">6</PageInput>
        </PageField>
        <Divider $h={41} />
        <PagerButtons>
          <IconButton $w={20} $color="#999" aria-label="Zoom out"><MdRemove size={19} /></IconButton>
          <IconButton $w={20} aria-label="Fit to width"><MdZoomIn size={22} /></IconButton>
          <IconButton $w={20} aria-label="Zoom in"><MdAdd size={22} /></IconButton>
        </PagerButtons>
      </Pager>
    </ViewerFooter>
  </Controls>
);

const WindowsTaskbar = () => (
  <Taskbar>
    <StartButton $w={45} aria-label="Start"><WindowsIcon /></StartButton>
    <Search>
      <SearchIcon />
      <SearchInput aria-label="Search" placeholder="Type here to search" />
    </Search>
    <TaskButton aria-label="Cortana"><CortanaIcon /></TaskButton>
    <TaskButton aria-label="Task view"><TaskViewIcon /></TaskButton>
    <TaskButton aria-label="Edge"><EdgeIcon /></TaskButton>
    <TaskButton $running aria-label="File Explorer"><ExplorerIcon /></TaskButton>
    <TaskButton aria-label="Store"><StoreIcon /></TaskButton>
    <TaskButton aria-label="Mail"><MailIcon /></TaskButton>
    <TaskButton $active aria-label="Chrome"><ChromeIcon /></TaskButton>
    <TaskButton $running aria-label="MATLAB"><MatlabIcon /></TaskButton>
    <Tray>
      <Weather><MoonIcon /><span>29°C&nbsp; Clear</span></Weather>
      <TrayIcons>
        <ChevronUp />
        <CloudIcon />
        <MeetNowIcon />
        <MicIcon />
        <WifiIcon />
        <VolumeIcon />
        <span>ENG</span>
      </TrayIcons>
      <Clock>10:23 PM<br />6/10/2021</Clock>
      <IconButton $w={50} aria-label="Notifications"><NoticeIcon /></IconButton>
      <Divider $h={37} $color="#6c7890" />
    </Tray>
  </Taskbar>
);

export default function App() {
  return (
    <Screen>
      <GlobalStyle />
      <Browser />
      <Viewer>
        <Classroom />
        <Document />
        <ViewerControls />
        <ScrollThumb />
      </Viewer>
      <WindowsTaskbar />
    </Screen>
  );
}
